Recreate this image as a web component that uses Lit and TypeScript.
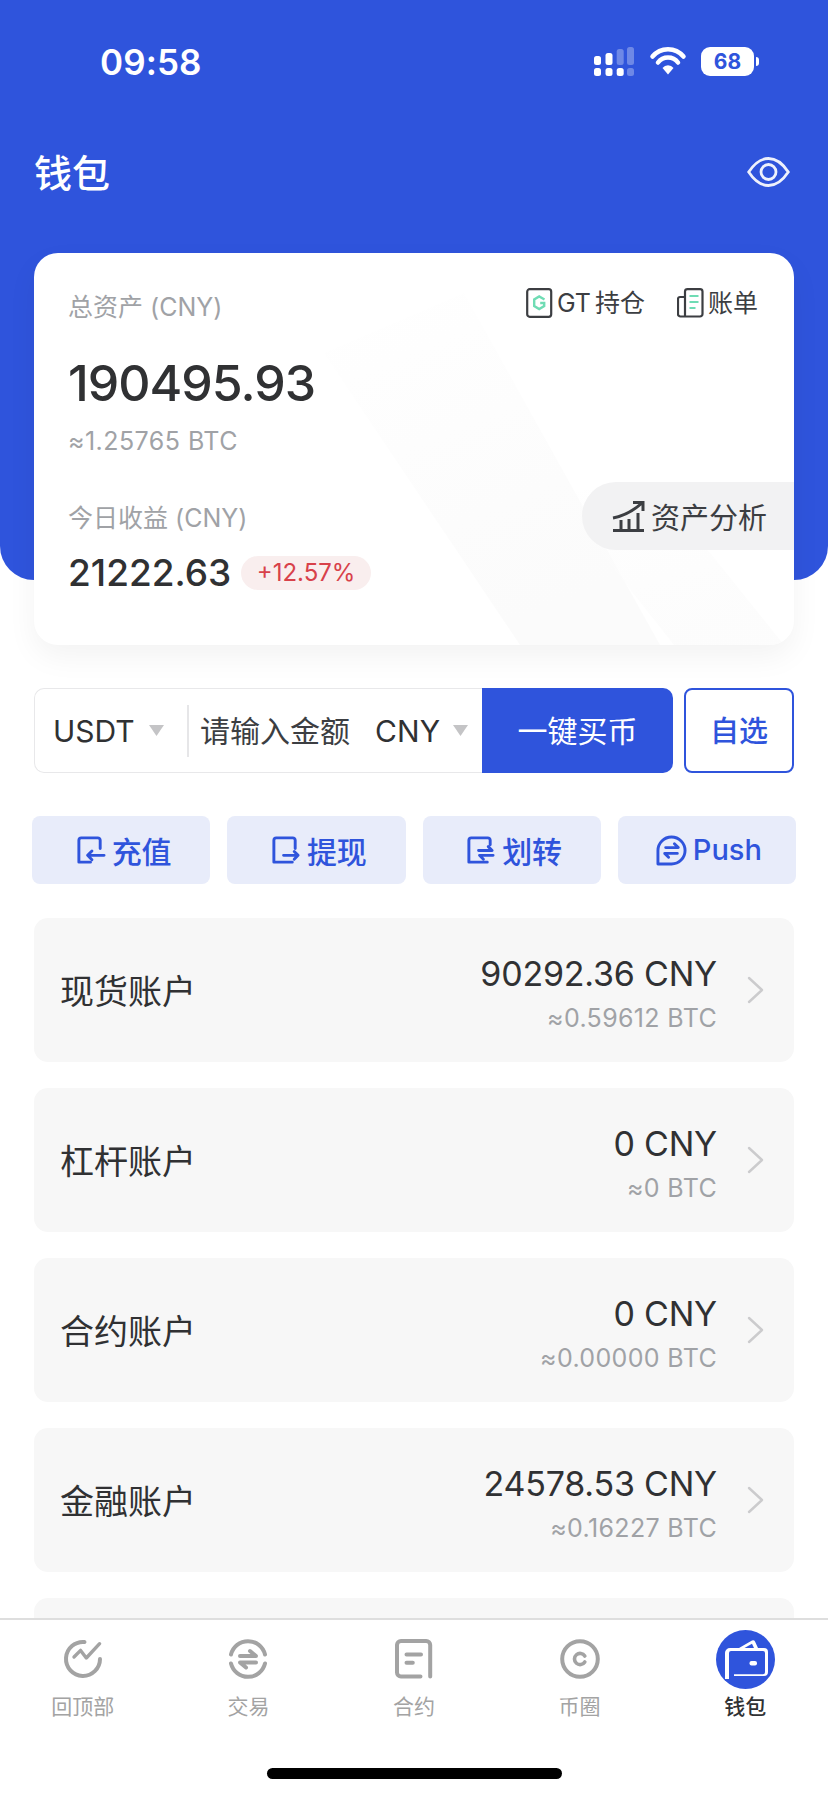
import { LitElement, html, css, svg } from "lit";
import { customElement } from "lit/decorators.js";

const accounts = [
  { name: "现货账户", cny: "90292.36 CNY", btc: "≈0.59612 BTC" },
  { name: "杠杆账户", cny: "0 CNY", btc: "≈0 BTC" },
  { name: "合约账户", cny: "0 CNY", btc: "≈0.00000 BTC" },
  { name: "金融账户", cny: "24578.53 CNY", btc: "≈0.16227 BTC" },
  { name: "", cny: "", btc: "" },
];

const blueIcon = (body: unknown) => html`<svg class="act-ic" viewBox="0 0 32 32" fill="none" stroke="#2f54dc" stroke-width="3" stroke-linecap="round" stroke-linejoin="round">${body}</svg>`;

const actions = [
  { label: "充值", icon: blueIcon(svg`<path d="M4 16V5.500a2.500 2.500 0 0 1 2.500-2.500h17a2.500 2.500 0 0 1 2.500 2.500V14M4 16v12h12"/><path d="M30 21H13M17.500 16.500L13 21l4.500 4.500"/>`) },
  { label: "提现", icon: blueIcon(svg`<path d="M26 14V5.500A2.500 2.500 0 0 0 23.500 3h-17A2.500 2.500 0 0 0 4 5.500V28h19"/><path d="M14 21h15M25 17l4 4-4 4"/>`) },
  { label: "划转", icon: blueIcon(svg`<path d="M26 10V5.500A2.500 2.500 0 0 0 23.500 3h-17A2.500 2.500 0 0 0 4 5.500V28h19"/><path d="M14 16h14l-4-4M29 21H15l4 4"/>`) },
  { label: "Push", icon: blueIcon(svg`<path d="M16 2a14 14 0 0 1 0 28H2V16A14 14 0 0 1 16 2z"/><path d="M10 13h13l-4-4M22 19H9l4 4"/>`) },
];

const tabs = [
  { label: "回顶部", icon: svg`<path d="M21.500 3A17 17 0 1 0 37 20"/><path d="M11 18l6.600-6.600 5.700 7.600 13.300-14.300" stroke-width="3.400"/>` },
  { label: "交易", icon: svg`<path d="M3 15.500a17.500 17.500 0 0 1 34 0M37 24.500a17.500 17.500 0 0 1-34 0"/><path d="M12 17h16l-6-5M28 23.500H12l6 5"/>` },
  { label: "合约", icon: svg`<path d="M36.200 37.500V6a4 4 0 0 0-4-4H7a4 4 0 0 0-4 4v27.500a4 4 0 0 0 4 4h19.500"/><path d="M12.500 15.500h14.500M12.500 23.800h6.300"/>` },
  { label: "币圈", icon: svg`<circle cx="20" cy="20" r="17.800"/><path d="M24.800 17a5.600 5.600 0 1 0 0 6" stroke-width="3.600"/>` },
];

@customElement("app-root")
export class AppRoot extends LitElement {
  static styles = css`
    :host {
      display: flex;
      flex-direction: column;
      width: 828px;
      height: 1796px;
      overflow: hidden;
      background: #fff;
      font-family: Inter, "Noto Sans CJK SC", sans-serif;
      color: #303133;
      position: relative;
    }
    * { box-sizing: border-box; }
    .main {
      flex: 1;
      min-height: 0;
      overflow: hidden;
      position: relative;
    }
    .backdrop {
      position: absolute;
      left: 0; top: 0;
      width: 828px;
      height: 580px;
      background: #2f54dc;
      border-radius: 0 0 34px 34px;
    }
    .content { position: relative; padding: 0 34px; }

    .status {
      height: 124px;
      margin: 0 -34px;
      position: relative;
      color: #fff;
    }
    .time {
      position: absolute;
      left: 100px; top: 42px;
      font: 600 35px/40px "Inter", sans-serif;
      letter-spacing: 0.1px;
    }
    .sys { position: absolute; left: 592px; top: 44px; }
    .batt {
      position: absolute;
      left: 701px; top: 47px;
      width: 53px; height: 29px;
      background: #fff;
      border-radius: 9px;
      color: #2f54dc;
      font: 700 21px/29px "Inter", sans-serif;
      text-align: center;
    }
    .nub {
      position: absolute;
      left: 756px; top: 57px;
      width: 3px; height: 9px;
      background: #fff;
      border-radius: 0 3px 3px 0;
    }

    .title {
      display: flex;
      align-items: center;
      justify-content: space-between;
      height: 96px;
      margin-right: 4px;
      color: #fff;
      font-size: 38px;
      line-height: 96px;
      font-weight: 500;
    }
    .title span { padding-top: 1px; }
    .title svg { width: 43px; height: 30px; display: block; }

    .card {
      position: relative;
      margin-top: 33px;
      height: 392px;
      background: #fff;
      border-radius: 24px;
      box-shadow: 0 12px 30px rgba(0,0,0,.05);
      padding: 39px 0 0 34px;
      overflow: hidden;
    }
    .wm {
      position: absolute;
      inset: 0;
      width: 760px; height: 392px;
    }
    .card-in { position: relative; }
    .lbl { font-size: 25px; line-height: 30px; color: #a0a2a6; }
    .big { font-size: 50px; line-height: 60px; margin-top: 31px; font-weight: 500; color: #303133; letter-spacing: -1px; }
    .sub { font-size: 25px; line-height: 30px; margin-top: 13px; color: #a0a2a6; letter-spacing: .45px; }
    .lbl2 { margin-top: 47px; }
    .today { display: flex; align-items: center; margin-top: 20px; height: 40px; }
    .today b { font-size: 37px; font-weight: 500; line-height: 40px; }
    .pct {
      margin-left: 10px;
      height: 34px;
      padding: 0 15.5px;
      border-radius: 17px;
      background: #f9eeee;
      color: #d8414a;
      font-size: 24px;
      line-height: 34px;
    }
    .tools {
      position: absolute;
      top: 35px; right: 36px;
      display: flex;
      gap: 32px;
      font-size: 25px;
      line-height: 30px;
      color: #3c3e42;
    }
    .tool { display: flex; align-items: center; gap: 4px; }
    .tool span { word-spacing: -3px; }
    .tool svg { width: 27px; height: 30px; display: block; }
    .analyze {
      position: absolute;
      right: 0; top: 229px;
      width: 212px; height: 68px;
      border-radius: 34px 0 0 34px;
      background: #f2f2f3;
      display: flex;
      align-items: center;
      padding-left: 30px;
      gap: 6px;
      font-size: 29px;
      color: #3c3e42;
    }
    .analyze svg { width: 33px; height: 32px; display: block; }

    .buy { display: flex; margin-top: 43px; height: 85px; }
    .input {
      width: 448px;
      display: flex;
      align-items: center;
      border: 1px solid #e8e8ea;
      border-right: 0;
      border-radius: 10px 0 0 10px;
      background: #fff;
      font-size: 30px;
      color: #303133;
    }
    .cur { width: 154px; padding-left: 18px; display: flex; align-items: center; gap: 14px; height: 52px; border-right: 2px solid #e6e6e8; flex: none; }
    .ph { padding: 0 0 3px 11px; color: #3c3e42; flex: 1; }
    .unit { display: flex; align-items: center; gap: 13px; padding-right: 14px; }
    .tri { width: 15px; height: 11px; display: block; }
    .go {
      width: 191px;
      background: #2f54dc;
      color: #fff;
      border-radius: 0 10px 10px 0;
      font-size: 30px;
      padding-bottom: 3px;
      display: flex; align-items: center; justify-content: center;
    }
    .fav {
      width: 110px;
      margin-left: 11px;
      border: 2px solid #2f54dc;
      border-radius: 8px;
      color: #2f54dc;
      font-size: 29px;
      padding-bottom: 3px;
      display: flex; align-items: center; justify-content: center;
      font-weight: 500;
    }

    .actions { display: flex; gap: 17px; margin: 43px -2px 0; }
    .act {
      flex: 1;
      height: 68px;
      background: #e8ecfa;
      border-radius: 8px;
      display: flex; align-items: center; justify-content: center;
      gap: 6px;
      padding-left: 4px;
      color: #2f54dc;
      font-size: 30px;
      font-weight: 500;
    }
    .act span { padding-bottom: 1px; }
    .act:last-child { font-size: 29px; }
    .act-ic { width: 31px; height: 31px; display: block; }

    .list { display: flex; flex-direction: column; gap: 26px; margin-top: 34px; }
    .row {
      height: 144px;
      flex: none;
      background: #f7f7f7;
      border-radius: 14px;
      display: flex; align-items: center;
      padding: 0 30px 0 26px;
    }
    .row .name { font-size: 34px; color: #303133; flex: 1; padding-bottom: 2px; }
    .row .vals { text-align: right; padding-top: 6px; }
    .row .cny { font-size: 34px; line-height: 40px; color: #303133; letter-spacing: -.2px; }
    .row .btc { font-size: 25px; line-height: 30px; margin-top: 9px; color: #a0a2a6; letter-spacing: .35px; }
    .chev { width: 17px; height: 28px; margin-left: 30px; display: block; }

    .tabbar {
      height: 178px;
      flex: none;
      border-top: 2px solid #dedede;
      background: #fff;
      position: relative;
      display: flex;
    }
    .tab {
      width: 165.6px;
      display: flex; flex-direction: column; align-items: center;
      padding-top: 19px;
      font-size: 21px;
      color: #a3a3a3;
      line-height: 24px;
    }
    .tab svg { width: 40px; height: 40px; display: block; margin-bottom: 16px; }
    .tab.on { color: #303133; font-weight: 500; padding-top: 10px; }
    .tab.on svg { width: 59px; height: 59px; margin-bottom: 6px; }
    .home {
      position: absolute;
      left: 267px; top: 148px;
      width: 295px; height: 11px;
      border-radius: 6px;
      background: #000;
    }
  `;

  render() {
    const tri = html`<svg class="tri" viewBox="0 0 15 11"><path d="M0 0h15L7.500 11z" fill="#c4c4c6"/></svg>`;
    return html`
      <div class="main">
        <div class="backdrop"></div>
        <div class="content">
          <div class="status">
            <div class="time">09:58</div>
            <svg class="sys" width="96" height="34" viewBox="0 0 96 34" fill="#fff">
              <rect x="2" y="12" width="7" height="9" rx="2.500"/><rect x="13.500" y="9" width="7" height="12" rx="2.500"/>
              <rect x="2" y="24" width="7" height="8" rx="2.500"/><rect x="13.500" y="24" width="7" height="8" rx="2.500"/><rect x="24.700" y="24" width="7" height="8" rx="2.500"/>
              <g opacity=".3"><rect x="24.700" y="5" width="7" height="16" rx="2.500"/><rect x="35" y="3" width="7" height="18" rx="2.500"/><rect x="35" y="24" width="7" height="8" rx="2.500"/></g>
              <path d="M60.500 12.500a20 20 0 0 1 31 0" fill="none" stroke="#fff" stroke-width="4.500" stroke-linecap="round"/>
              <path d="M66 18.500a12.500 12.500 0 0 1 20 0" fill="none" stroke="#fff" stroke-width="4.500" stroke-linecap="round"/>
              <path d="M70.500 24a7 7 0 0 1 11 0L76 30.500z"/>
            </svg>
            <div class="batt">68</div>
            <div class="nub"></div>
          </div>

          <div class="title">
            <span>钱包</span>
            <svg viewBox="0 0 43 30" fill="none" stroke="#fff" stroke-width="2.800" opacity=".92">
              <path d="M1.700 15C8 5.500 14.500 1.500 21.500 1.500S35 5.500 41.300 15C35 24.500 28.500 28.500 21.500 28.500S8 24.500 1.700 15z"/>
              <circle cx="21.500" cy="15" r="7.500"/>
            </svg>
          </div>

          <div class="card">
            <svg class="wm" viewBox="0 0 760 392">
              <defs>
                <linearGradient id="wg" x1="0" y1="0" x2="0.400" y2="1">
                  <stop offset="0" stop-color="#fcfcfc" stop-opacity="0"/>
                  <stop offset=".7" stop-color="#fcfcfc"/>
                  <stop offset="1" stop-color="#fbfbfb"/>
                </linearGradient>
              </defs>
              <path d="M290 100L430 40 626 392H486z" fill="url(#wg)"/>
              <path d="M520 240L620 230 750 392H640z" fill="url(#wg)" opacity=".7"/>
            </svg>
            <div class="card-in">
              <div class="lbl">总资产 (CNY)</div>
              <div class="big">190495.93</div>
              <div class="sub">≈1.25765 BTC</div>
              <div class="lbl lbl2">今日收益 (CNY)</div>
              <div class="today"><b>21222.63</b><span class="pct">+12.57%</span></div>
            </div>
            <div class="tools">
              <div class="tool">
                <svg viewBox="0 0 27 30" fill="none">
                  <rect x="1.200" y="1.200" width="24" height="27.600" rx="2.500" stroke="#3c3e42" stroke-width="2.200"/>
                  <path d="M18.500 11.500L13.200 8.500l-5 3v6.500l5 3 5-3v-3h-4" stroke="#6fdcb4" stroke-width="2.400"/>
                </svg>
                <span>GT 持仓</span>
              </div>
              <div class="tool">
                <svg viewBox="0 0 27 30" fill="none" stroke-linejoin="round">
                  <path d="M8 9H3a2 2 0 0 0-2 2v15a2.500 2.500 0 0 0 2.500 2.500H23a2.500 2.500 0 0 0 2.500-2.500V3.500A2.500 2.500 0 0 0 23 1.200H10.500A2.500 2.500 0 0 0 8 3.500V28" stroke="#3c3e42" stroke-width="2.200"/>
                  <path d="M12.500 8h9M12.500 14h9M12.500 20h6" stroke="#6fdcb4" stroke-width="2.200"/>
                </svg>
                <span>账单</span>
              </div>
            </div>
            <div class="analyze">
              <svg viewBox="0 0 33 32" fill="none" stroke="#3c3e42" stroke-width="3">
                <path d="M1 30.500h31"/>
                <path d="M1 18C12 16 21 11 30 3M21 2.500h10V11"/>
                <path d="M9 20v9M17 19v10M26 13v16" stroke-width="3"/>
              </svg>
              <span>资产分析</span>
            </div>
          </div>

          <div class="buy">
            <div class="input">
              <div class="cur"><span>USDT</span>${tri}</div>
              <div class="ph">请输入金额</div>
              <div class="unit"><span>CNY</span>${tri}</div>
            </div>
            <div class="go">一键买币</div>
            <div class="fav">自选</div>
          </div>

          <div class="actions">
            ${actions.map((a) => html`<div class="act">${a.icon}<span>${a.label}</span></div>`)}
          </div>

          <div class="list">
            ${accounts.map((a) => html`
              <div class="row">
                <div class="name">${a.name}</div>
                ${a.name ? html`
                  <div class="vals">
                    <div class="cny">${a.cny}</div>
                    <div class="btc">${a.btc}</div>
                  </div>
                  <svg class="chev" viewBox="0 0 17 28" fill="none" stroke="#cbcbcd" stroke-width="2.400" stroke-linecap="round" stroke-linejoin="round"><path d="M2 2l13 12L2 26"/></svg>
                ` : ""}
              </div>`)}
          </div>
        </div>
      </div>

      <div class="tabbar">
        ${tabs.map((t) => html`
          <div class="tab">
            <svg viewBox="0 0 40 40" fill="none" stroke="#a3a3a3" stroke-width="4" stroke-linecap="round" stroke-linejoin="round">${t.icon}</svg>
            <span>${t.label}</span>
          </div>`)}
        <div class="tab on">
          <svg viewBox="0 0 59 59">
            <circle cx="29.500" cy="29.500" r="29.500" fill="#2f54dc"/>
            <path d="M9 49V23a5 5 0 0 1 5-5h9L36 10.500q2-1 3 1l3 6.500h6a4 4 0 0 1 4 4v20a4 4 0 0 1-4 4H18v3H9z" fill="#fff"/>
            <path d="M13 49V23a2 2 0 0 1 2-2h32a2 2 0 0 1 2 2v19.300a2 2 0 0 1-2 2H18V49z" fill="#2f54dc"/>
            <path d="M28.500 18L36 13.800l2 4.200z" fill="#2f54dc"/>
            <rect x="33.500" y="31" width="7.500" height="4.500" rx="2" fill="#fff"/>
          </svg>
          <span>钱包</span>
        </div>
        <div class="home"></div>
      </div>
    `;
  }
}
